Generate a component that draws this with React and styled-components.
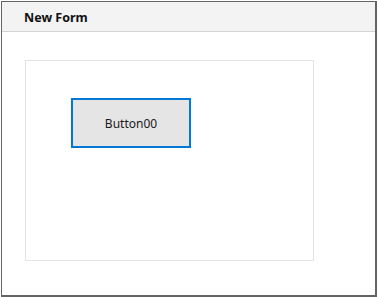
import React from "react";
import styled, { createGlobalStyle } from "styled-components";

const Global = createGlobalStyle`
  html, body { margin: 0; padding: 0; background: #ffffff; }
  body { font-family: "Noto Sans", "Open Sans", "Liberation Sans", sans-serif; }
`;

const Page = styled.div`
  padding: 1px 0 0 1px;
`;

const Window = styled.div`
  box-sizing: border-box;
  width: 376px;
  height: 296px;
  border: 1px solid #646464;
  border-right-width: 2px;
  border-bottom-width: 2px;
  background: #ffffff;
  display: flex;
  flex-direction: column;
`;

const TitleBar = styled.div`
  box-sizing: border-box;
  height: 30px;
  background: #f3f3f3;
  border-bottom: 1px solid #d4d4d4;
  display: flex;
  align-items: center;
  padding: 2px 0 0 22px;
`;

const Title = styled.span`
  font-size: 12.5px;
  font-weight: 700;
  color: #111111;
`;

const Body = styled.div`
  flex: 1;
  padding: 28px 0 0 23px;
`;

const Canvas = styled.div`
  box-sizing: border-box;
  width: 289px;
  height: 201px;
  border: 1px solid #e3e3e3;
  padding: 37px 0 0 45px;
`;

const DesignButton = styled.div`
  box-sizing: border-box;
  width: 120px;
  height: 50px;
  border: 2px solid #0078d7;
  background: #e5e5e5;
  display: flex;
  align-items: center;
  justify-content: center;
  font-size: 12px;
  color: #1a1a1a;
`;

export default function App() {
  return (
    <>
      <Global />
      <Page>
        <Window>
          <TitleBar>
            <Title>New Form</Title>
          </TitleBar>
          <Body>
            <Canvas>
              <DesignButton>Button00</DesignButton>
            </Canvas>
          </Body>
        </Window>
      </Page>
    </>
  );
}
